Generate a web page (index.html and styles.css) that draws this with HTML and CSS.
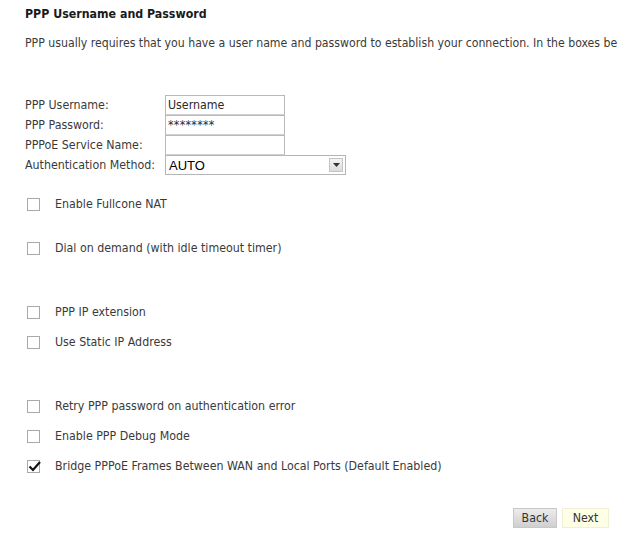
FILE: index.html
```html
<!DOCTYPE html>
<html>
<head>
<meta charset="utf-8">
<link rel="stylesheet" href="styles.css">
</head>
<body>
<div class="page">
  <div class="title">PPP Username and Password</div>
  <div class="intro">PPP usually requires that you have a user name and password to establish your connection. In the boxes be</div>

  <div class="form">
    <div class="label">PPP Username:</div>
    <div class="field">Username</div>
    <div class="label">PPP Password:</div>
    <div class="field pw">********</div>
    <div class="label">PPPoE Service Name:</div>
    <div class="field"></div>
    <div class="label">Authentication Method:</div>
    <div class="select"><span class="sel-text">AUTO</span><span class="sel-btn"><svg width="7" height="4" viewBox="0 0 7 4"><path d="M0 0h7L3.5 4z" fill="#333"/></svg></span></div>
  </div>

  <div class="group g1">
    <div class="row"><span class="cb"></span><span>Enable Fullcone NAT</span></div>
  </div>
  <div class="group g2">
    <div class="row"><span class="cb"></span><span>Dial on demand (with idle timeout timer)</span></div>
  </div>
  <div class="group g3">
    <div class="row"><span class="cb"></span><span>PPP IP extension</span></div>
    <div class="row"><span class="cb"></span><span>Use Static IP Address</span></div>
  </div>
  <div class="group g3">
    <div class="row"><span class="cb"></span><span>Retry PPP password on authentication error</span></div>
    <div class="row"><span class="cb"></span><span>Enable PPP Debug Mode</span></div>
    <div class="row"><span class="cb checked"><svg width="13" height="11" viewBox="0 0 13 11"><path d="M1.5 5.5l3.5 3.5l7-8" fill="none" stroke="#111" stroke-width="2.2"/></svg></span><span>Bridge PPPoE Frames Between WAN and Local Ports (Default Enabled)</span></div>
  </div>

  <div class="buttons">
    <span class="btn back">Back</span>
    <span class="btn next">Next</span>
  </div>
</div>
</body>
</html>
```

FILE: styles.css
```css
html, body {
  margin: 0;
  padding: 0;
  background: #fff;
  overflow: hidden;
}
body {
  width: 619px;
  height: 538px;
  font-family: "DejaVu Sans Condensed", "Liberation Sans", sans-serif;
  font-size: 12.3px;
  color: #333;
}
.page {
  padding: 6px 10px 0 25px;
}
.title {
  font-weight: bold;
  line-height: 16px;
  height: 16px;
  color: #1a1a1a;
}
.intro {
  margin-top: 13px;
  line-height: 16px;
  height: 16px;
  white-space: nowrap;
  font-size: 12.2px;
  color: #3a3a3a;
}
.form {
  margin-top: 44px;
  display: grid;
  grid-template-columns: 140px auto;
  grid-auto-rows: 20px;
  align-items: center;
  color: #3a3a3a;
}
.label {
  line-height: 20px;
}
.field {
  border: 1px solid #b9b9b9;
  border-bottom-color: #d0d0d0;
  box-sizing: border-box;
  width: 120px;
  height: 20px;
  padding-left: 2px;
  line-height: 18px;
  color: #2a2a2a;
}
.field.pw {
  letter-spacing: 0.3px;
}
.select {
  width: 181px;
  height: 20px;
  box-sizing: border-box;
  border: 1px solid #b5b5b5;
  display: flex;
  align-items: center;
  justify-content: space-between;
  padding: 0 2px 0 3px;
  font-family: "Liberation Sans", sans-serif;
  font-size: 13px;
  color: #000;
}
.sel-btn {
  width: 14px;
  height: 14px;
  box-sizing: border-box;
  border: 1px solid #c4c4c4;
  background: linear-gradient(#f4f4f4, #dcdcdc);
  display: flex;
  align-items: center;
  justify-content: center;
}
.group {
  display: flex;
  flex-direction: column;
  gap: 10px;
}
.g1 { margin-top: 19px; }
.g2 { margin-top: 24px; }
.g3 { margin-top: 44px; }
.row {
  display: flex;
  align-items: center;
  height: 20px;
  color: #3a3a3a;
}
.cb {
  width: 13px;
  height: 13px;
  box-sizing: border-box;
  border: 1px solid #a9a9a9;
  margin-left: 2px;
  margin-right: 15px;
  position: relative;
}
.cb.checked svg {
  position: absolute;
  left: 0;
  top: 0;
}
.buttons {
  margin-top: 32px;
  display: flex;
  justify-content: flex-end;
  gap: 5px;
}
.btn {
  height: 20px;
  box-sizing: border-box;
  text-align: center;
  color: #333;
  font-size: 12.3px;
}
.back {
  width: 44px;
  background: linear-gradient(#ececec, #cfcfcf);
  border: 1px solid #c8c8c8;
  line-height: 18px;
}
.next {
  width: 47px;
  background: #ffffe6;
  border: 1px solid #f0f0d8;
  line-height: 18px;
}
```
